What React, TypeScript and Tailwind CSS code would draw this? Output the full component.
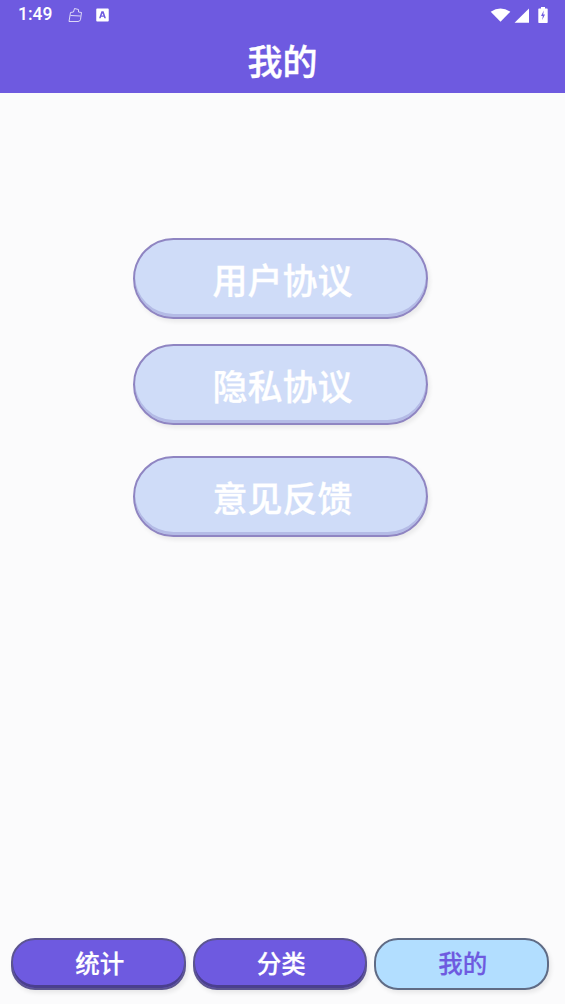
const cjk = "font-['Roboto','Noto_Sans_CJK_SC',sans-serif]";

const menuItems = [
  { label: "用户协议", className: "mt-[145px]" },
  { label: "隐私协议", className: "mt-[25px]" },
  { label: "意见反馈", className: "mt-[31px]" },
];

const tabs = [
  { label: "统计", active: false },
  { label: "分类", active: false },
  { label: "我的", active: true },
];

function StatusBar() {
  return (
    <div className="flex h-[30px] items-center pl-[18px] pr-[17px] text-white">
      <span className="font-['Roboto',sans-serif] text-[17.5px] font-medium leading-none">1:49</span>
      <svg className="ml-[15px]" width="16" height="16" viewBox="0 0 16 16" fill="none" stroke="white" strokeWidth="0.9" opacity="0.85">
        <path d="M2 14.5 L3.5 5.5 L6.5 5 L7.5 1.5 L11.5 2.5 L11.5 5 L14.5 5.5 L13.5 12.5 Q13 14.5 11 14.5 Z" />
        <path d="M3.5 8.5 L13.5 9" />
      </svg>
      <svg className="ml-[13px]" width="13" height="14" viewBox="0 0 12 13">
        <path fillRule="evenodd" fill="white" d="M1 0.5 H11 a0.8 0.8 0 0 1 0.8 0.8 V11.7 a0.8 0.8 0 0 1 -0.8 0.8 H1 a0.8 0.8 0 0 1 -0.8 -0.8 V1.3 a0.8 0.8 0 0 1 0.8 -0.8 Z M5 3 L2.8 9.5 H4.3 L4.7 8.2 H7.3 L7.7 9.5 H9.2 L7 3 Z M6 4.8 L6.9 7 H5.1 Z" />
      </svg>
      <div className="ml-auto flex items-center">
        <svg className="mr-[1px]" width="21" height="14" viewBox="0 0 20 14">
          <path fill="white" d="M0.2 3.8 Q10 -2.6 19.8 3.8 L10 13.8 Z" />
        </svg>
        <svg className="ml-[2px]" width="15" height="15" viewBox="0 0 14 14">
          <path fill="white" d="M14 0.5 V13.8 H0.5 Z" />
        </svg>
        <svg className="ml-[9px]" width="10" height="18" viewBox="0 0 10 17">
          <path fillRule="evenodd" fill="white" d="M3 0.5 H7 V2 H9 a0.7 0.7 0 0 1 0.7 0.7 V15.8 a0.7 0.7 0 0 1 -0.7 0.7 H1 a0.7 0.7 0 0 1 -0.7 -0.7 V2.7 a0.7 0.7 0 0 1 0.7 -0.7 H3 Z M5.8 4 L3 9.6 H4.8 L4.2 13.5 L7 8 H5.2 Z" />
        </svg>
      </div>
    </div>
  );
}

export default function App() {
  return (
    <div className={`flex h-[1004px] w-[565px] flex-col overflow-hidden bg-[#fbfbfc] ${cjk}`}>
      <header className="h-[93px] bg-[#6e5ae0]">
        <StatusBar />
        <h1 className="mt-[11px] text-center text-[35px] font-medium leading-[46px] text-white [-webkit-text-stroke:0.4px_white]">我的</h1>
      </header>

      <main className="flex flex-1 flex-col items-start pl-[133px]">
        {menuItems.map((item) => (
          <button
            className={`flex h-[81px] w-[295px] items-center justify-center rounded-[41px] border-2 border-[#8f85c2] bg-[#cfdcf8] pl-[4px] pt-[9px] text-[35px] font-medium text-white shadow-[inset_0_-3px_0_#b4bbe6,2px_3px_4px_rgba(0,0,0,0.07)] [-webkit-text-stroke:0.3px_white] ${item.className}`}
            key={item.label}
            type="button"
          >
            {item.label}
          </button>
        ))}
      </main>

      <nav className="mb-[14px] flex gap-[7px] pl-[11px]">
        {tabs.map((tab) => (
          <button
            className={
              tab.active
                ? "flex h-[52px] w-[174.5px] items-center justify-center rounded-[24px] border-2 border-[#5f6b85] bg-[#b2deff] pl-[3px] pt-[2px] text-[24.5px] font-medium text-[#6e5ae0] shadow-[2px_3px_4px_rgba(0,0,0,0.08)] [-webkit-text-stroke:0.2px_#6e5ae0]"
                : "flex h-[52px] w-[174.5px] items-center justify-center rounded-[24px] border-2 border-[#5c5590] bg-[#6e5ae0] pl-[3px] pt-[2px] text-[24.5px] font-medium text-white shadow-[inset_0_-3px_0_#4a3f8e,2px_3px_4px_rgba(0,0,0,0.08)] [-webkit-text-stroke:0.2px_white]"
            }
            key={tab.label}
            type="button"
          >
            {tab.label}
          </button>
        ))}
      </nav>
    </div>
  );
}
